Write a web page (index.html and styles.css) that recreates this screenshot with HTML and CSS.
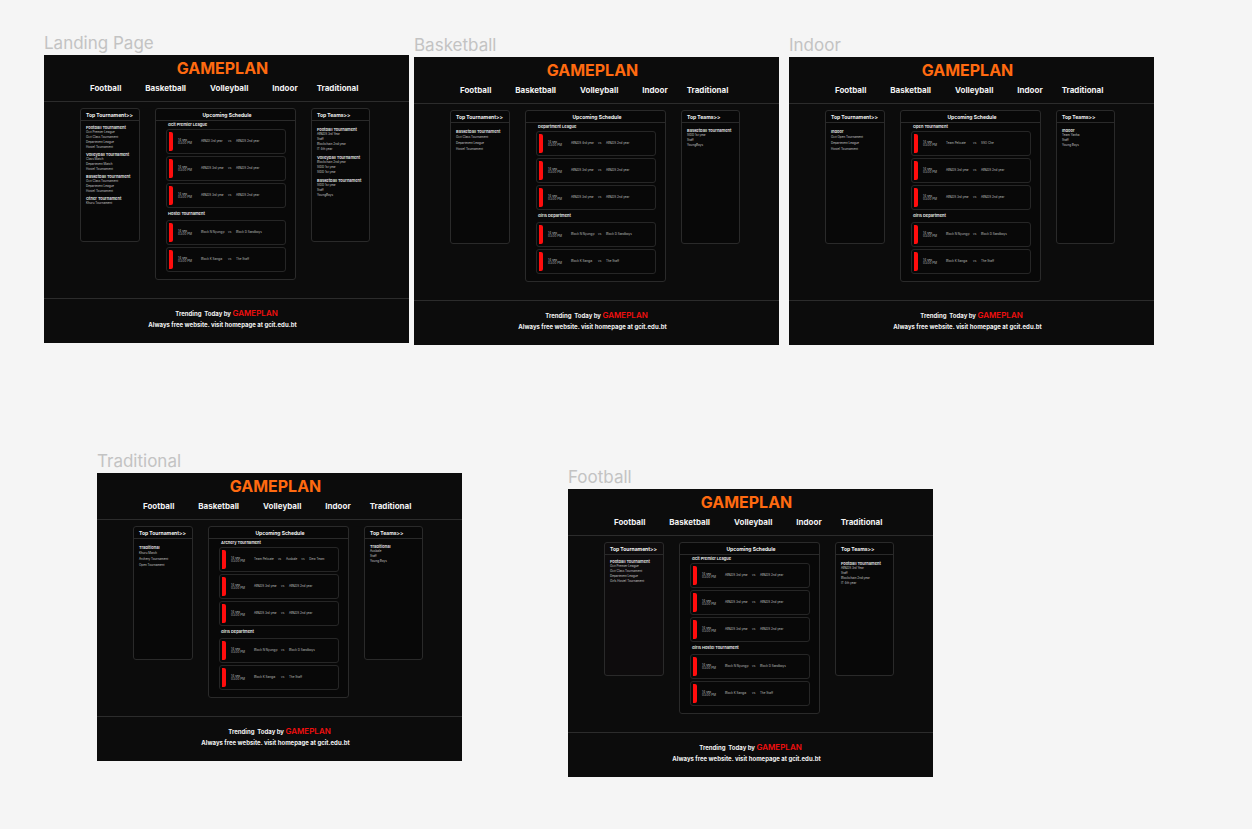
FILE: index.html
```html
<!DOCTYPE html>
<html lang="en">
<head>
<meta charset="utf-8">
<title>Gameplan pages</title>
<link rel="stylesheet" href="styles.css">
</head>
<body>
<main class="canvas">

<section class="artboard landing">
  <h2 class="label">Landing Page</h2>
  <div class="page">
    <header class="top">
      <h1 class="brand">GAMEPLAN</h1>
      <nav class="nav"><a href="#football">Football</a><a href="#basketball">Basketball</a><a href="#volleyball">Volleyball</a><a href="#indoor">Indoor</a><a href="#traditional">Traditional</a></nav>
    </header>
    <div class="columns">
      <aside class="panel side">
        <h3>Top Tournament&gt;&gt;</h3>
        <div class="lists">
          <div><h4>Football Tournament</h4><ul><li>Gcit Premier League</li><li>Gcit Class Tournament</li><li>Department League</li><li>Hostel Tournament</li></ul></div>
          <div><h4>Volleyball Tournament</h4><ul><li>Class Match</li><li>Department Match</li><li>Hostel Tournament</li></ul></div>
          <div><h4>Basketball Tournament</h4><ul><li>Gcit Class Tournament</li><li>Department League</li><li>Hostel Tournament</li></ul></div>
          <div><h4>Other Tournament</h4><ul><li>Khuru Tournament</li></ul></div>
        </div>
      </aside>
      <section class="panel schedule">
        <h3>Upcoming Schedule</h3>
        <h4>Gcit Premier League</h4>
        <div class="matches">
          <article class="match"><time>14 sep<br>03:00 PM</time><p><span>AB&amp;DI 3rd year</span><i>vs</i><span>AB&amp;DS 2nd year</span></p></article>
          <article class="match"><time>14 sep<br>03:00 PM</time><p><span>AB&amp;DS 3rd year</span><i>vs</i><span>AB&amp;DS 2nd year</span></p></article>
          <article class="match"><time>14 sep<br>03:00 PM</time><p><span>AB&amp;DS 3rd year</span><i>vs</i><span>AB&amp;DS 2nd year</span></p></article>
        </div>
        <h4>Hostel Tournament</h4>
        <div class="matches">
          <article class="match"><time>14 sep<br>03:00 PM</time><p><span>Block N Nyungyi</span><i>vs</i><span>Block D Sandboys</span></p></article>
          <article class="match"><time>14 sep<br>03:00 PM</time><p><span>Block K Sangja</span><i>vs</i><span>The Staff</span></p></article>
        </div>
      </section>
      <aside class="panel side teams low">
        <h3>Top Teams&gt;&gt;</h3>
        <div class="lists">
          <div><h4>Football Tournament</h4><ul><li>AB&amp;DS 3rd Year</li><li>Staff</li><li>Blockchain 2nd year</li><li>IT 4th year</li></ul></div>
          <div><h4>Volleyball Tournament</h4><ul><li>Blockchain 2nd year</li><li>SIDD 1st year</li><li>SIDD 1st year</li></ul></div>
          <div><h4>Basketball Tournament</h4><ul><li>SIDD 1st year</li><li>Staff</li><li>YoungBoys</li></ul></div>
        </div>
      </aside>
    </div>
    <footer class="bottom"><p class="trending">Trending&nbsp; Today by <strong>GAMEPLAN</strong></p><p>Always free website. visit homepage at gcit.edu.bt</p></footer>
  </div>
</section>

<section class="artboard basketball">
  <h2 class="label">Basketball</h2>
  <div class="page">
    <header class="top">
      <h1 class="brand">GAMEPLAN</h1>
      <nav class="nav"><a href="#football">Football</a><a href="#basketball">Basketball</a><a href="#volleyball">Volleyball</a><a href="#indoor">Indoor</a><a href="#traditional">Traditional</a></nav>
    </header>
    <div class="columns">
      <aside class="panel side low loose">
        <h3>Top Tournament&gt;&gt;</h3>
        <div class="lists">
          <div><h4>Basketball Tournament</h4><ul><li>Gcit Class Tournament</li><li>Department League</li><li>Hostel Tournament</li></ul></div>
        </div>
      </aside>
      <section class="panel schedule">
        <h3>Upcoming Schedule</h3>
        <h4>Department League</h4>
        <div class="matches">
          <article class="match"><time>14 sep<br>03:00 PM</time><p><span>AB&amp;DS 4rd year</span><i>vs</i><span>AB&amp;DS 2nd year</span></p></article>
          <article class="match"><time>14 sep<br>03:00 PM</time><p><span>AB&amp;DS 3rd year</span><i>vs</i><span>AB&amp;DS 2nd year</span></p></article>
          <article class="match"><time>14 sep<br>03:00 PM</time><p><span>AB&amp;DS 3rd year</span><i>vs</i><span>AB&amp;DS 2nd year</span></p></article>
        </div>
        <h4>Girls Department</h4>
        <div class="matches">
          <article class="match"><time>14 sep<br>03:00 PM</time><p><span>Block N Nyungyi</span><i>vs</i><span>Block D Sandboys</span></p></article>
          <article class="match"><time>14 sep<br>03:00 PM</time><p><span>Block K Sangja</span><i>vs</i><span>The Staff</span></p></article>
        </div>
      </section>
      <aside class="panel side teams">
        <h3>Top Teams&gt;&gt;</h3>
        <div class="lists">
          <div><h4>Basketball Tournament</h4><ul><li>SIDD 1st year</li><li>Staff</li><li>YoungBoys</li></ul></div>
        </div>
      </aside>
    </div>
    <footer class="bottom"><p class="trending">Trending&nbsp; Today by <strong>GAMEPLAN</strong></p><p>Always free website. visit homepage at gcit.edu.bt</p></footer>
  </div>
</section>

<section class="artboard indoor">
  <h2 class="label">Indoor</h2>
  <div class="page">
    <header class="top">
      <h1 class="brand">GAMEPLAN</h1>
      <nav class="nav"><a href="#football">Football</a><a href="#basketball">Basketball</a><a href="#volleyball">Volleyball</a><a href="#indoor">Indoor</a><a href="#traditional">Traditional</a></nav>
    </header>
    <div class="columns">
      <aside class="panel side low loose">
        <h3>Top Tournament&gt;&gt;</h3>
        <div class="lists">
          <div><h4>Indoor</h4><ul><li>Gcit Open Tournament</li><li>Department League</li><li>Hostel Tournament</li></ul></div>
        </div>
      </aside>
      <section class="panel schedule">
        <h3>Upcoming Schedule</h3>
        <h4>Open Tournament</h4>
        <div class="matches">
          <article class="match"><time>14 sep<br>03:00 PM</time><p><span>Team Pelicate</span><i>vs</i><span>SSO Che</span></p></article>
          <article class="match"><time>14 sep<br>03:00 PM</time><p><span>AB&amp;DS 3rd year</span><i>vs</i><span>AB&amp;DS 2nd year</span></p></article>
          <article class="match"><time>14 sep<br>03:00 PM</time><p><span>AB&amp;DS 3rd year</span><i>vs</i><span>AB&amp;DS 2nd year</span></p></article>
        </div>
        <h4>Girls Department</h4>
        <div class="matches">
          <article class="match"><time>14 sep<br>03:00 PM</time><p><span>Block N Nyungyi</span><i>vs</i><span>Block D Sandboys</span></p></article>
          <article class="match"><time>14 sep<br>03:00 PM</time><p><span>Block K Sangja</span><i>vs</i><span>The Staff</span></p></article>
        </div>
      </section>
      <aside class="panel side teams">
        <h3>Top Teams&gt;&gt;</h3>
        <div class="lists">
          <div><h4>Indoor</h4><ul><li>Team Yanha</li><li>Staff</li><li>Young Boys</li></ul></div>
        </div>
      </aside>
    </div>
    <footer class="bottom"><p class="trending">Trending&nbsp; Today by <strong>GAMEPLAN</strong></p><p>Always free website. visit homepage at gcit.edu.bt</p></footer>
  </div>
</section>

<section class="artboard traditional">
  <h2 class="label">Traditional</h2>
  <div class="page">
    <header class="top">
      <h1 class="brand">GAMEPLAN</h1>
      <nav class="nav"><a href="#football">Football</a><a href="#basketball">Basketball</a><a href="#volleyball">Volleyball</a><a href="#indoor">Indoor</a><a href="#traditional">Traditional</a></nav>
    </header>
    <div class="columns">
      <aside class="panel side low loose">
        <h3>Top Tournament&gt;&gt;</h3>
        <div class="lists">
          <div><h4>Traditional</h4><ul><li>Khuru Match</li><li>Archery Tournament</li><li>Open Tournament</li></ul></div>
        </div>
      </aside>
      <section class="panel schedule">
        <h3>Upcoming Schedule</h3>
        <h4>Archery Tournament</h4>
        <div class="matches">
          <article class="match three"><time>14 sep<br>03:00 PM</time><p><span>Team Pelicate</span><i>vs</i><span>Ausbale</span><i>vs</i><span>Dew Team</span></p></article>
          <article class="match"><time>14 sep<br>03:00 PM</time><p><span>AB&amp;DS 3rd year</span><i>vs</i><span>AB&amp;DS 2nd year</span></p></article>
          <article class="match"><time>14 sep<br>03:00 PM</time><p><span>AB&amp;DS 3rd year</span><i>vs</i><span>AB&amp;DS 2nd year</span></p></article>
        </div>
        <h4>Girls Department</h4>
        <div class="matches">
          <article class="match"><time>14 sep<br>03:00 PM</time><p><span>Block N Nyungyi</span><i>vs</i><span>Block D Sandboys</span></p></article>
          <article class="match"><time>14 sep<br>03:00 PM</time><p><span>Block K Sangja</span><i>vs</i><span>The Staff</span></p></article>
        </div>
      </section>
      <aside class="panel side teams">
        <h3>Top Teams&gt;&gt;</h3>
        <div class="lists">
          <div><h4>Traditional</h4><ul><li>Ausbale</li><li>Staff</li><li>Young Boys</li></ul></div>
        </div>
      </aside>
    </div>
    <footer class="bottom"><p class="trending">Trending&nbsp; Today by <strong>GAMEPLAN</strong></p><p>Always free website. visit homepage at gcit.edu.bt</p></footer>
  </div>
</section>

<section class="artboard football">
  <h2 class="label">Football</h2>
  <div class="page">
    <header class="top">
      <h1 class="brand">GAMEPLAN</h1>
      <nav class="nav"><a href="#football">Football</a><a href="#basketball">Basketball</a><a href="#volleyball">Volleyball</a><a href="#indoor">Indoor</a><a href="#traditional">Traditional</a></nav>
    </header>
    <div class="columns">
      <aside class="panel side tinted">
        <h3>Top Tournament&gt;&gt;</h3>
        <div class="lists">
          <div><h4>Football Tournament</h4><ul><li>Gcit Premier League</li><li>Gcit Class Tournament</li><li>Department League</li><li>Girls Hostel Tournament</li></ul></div>
        </div>
      </aside>
      <section class="panel schedule">
        <h3>Upcoming Schedule</h3>
        <h4>Gcit Premier League</h4>
        <div class="matches">
          <article class="match"><time>14 sep<br>03:00 PM</time><p><span>AB&amp;DS 3rd year</span><i>vs</i><span>AB&amp;DS 2nd year</span></p></article>
          <article class="match"><time>14 sep<br>03:00 PM</time><p><span>AB&amp;DS 3rd year</span><i>vs</i><span>AB&amp;DS 2nd year</span></p></article>
          <article class="match"><time>14 sep<br>03:00 PM</time><p><span>AB&amp;DS 3rd year</span><i>vs</i><span>AB&amp;DS 2nd year</span></p></article>
        </div>
        <h4>Girls Hostel Tournament</h4>
        <div class="matches">
          <article class="match"><time>14 sep<br>03:00 PM</time><p><span>Block N Nyungyi</span><i>vs</i><span>Block D Sandboys</span></p></article>
          <article class="match"><time>14 sep<br>03:00 PM</time><p><span>Block K Sangja</span><i>vs</i><span>The Staff</span></p></article>
        </div>
      </section>
      <aside class="panel side teams low">
        <h3>Top Teams&gt;&gt;</h3>
        <div class="lists">
          <div><h4>Football Tournament</h4><ul><li>AB&amp;DS 3rd Year</li><li>Staff</li><li>Blockchain 2nd year</li><li>IT 4th year</li></ul></div>
        </div>
      </aside>
    </div>
    <footer class="bottom"><p class="trending">Trending&nbsp; Today by <strong>GAMEPLAN</strong></p><p>Always free website. visit homepage at gcit.edu.bt</p></footer>
  </div>
</section>

</main>
</body>
</html>
```

FILE: styles.css
```css
* { box-sizing: border-box; margin: 0; padding: 0; }

body {
  background: #f5f5f5;
  font-family: Inter, "Liberation Sans", sans-serif;
}

.canvas { position: relative; min-height: 100vh; }

/* Artboards sit freely on the canvas */
.artboard { position: absolute; width: 365px; }
.landing { left: 44px; top: 31px; }
.basketball { left: 414px; top: 33px; }
.indoor { left: 789px; top: 33px; }
.traditional { left: 97px; top: 449px; }
.football { left: 568px; top: 465px; }

.label {
  font-size: 17px;
  line-height: 24px;
  font-weight: 400;
  color: #c3c3c3;
}

.page {
  display: flex;
  flex-direction: column;
  background: #0c0c0c;
  color: #f2f2f2;
}

.top {
  padding-top: 3px;
  border-bottom: 1px solid #2c2c2c;
}
.brand {
  padding-right: 8px;
  text-align: center;
  font-size: 16px;
  line-height: 20px;
  font-weight: 700;
  color: #ff6a10;
}
.nav {
  display: flex;
  gap: 24px;
  padding: 4px 0 7px 46px;
  font-size: 8px;
  line-height: 12px;
  font-weight: 700;
}
.nav a { color: inherit; text-decoration: none; }
.nav a:last-child { margin-left: -5px; }

.columns {
  display: flex;
  align-items: flex-start;
  gap: 15px;
  padding: 6px 36px 18px;
}
.panel {
  background: #080808;
  border: 1px solid #2a2a2a;
  border-radius: 3px;
}
.panel h3 {
  border-bottom: 1px solid #2a2a2a;
  font-size: 5px;
  line-height: 12px;
  height: 12px;
  font-weight: 700;
}
.panel h4 { font-size: 4px; line-height: 5px; font-weight: 600; }

.side { width: 60px; height: 134px; }
.side h3 { padding-left: 5px; }
.teams { width: 59px; }
.lists {
  display: grid;
  gap: 2px;
  padding: 4px 0 4px 5px;
  font-size: 3px;
  line-height: 5px;
  color: #c4c4c4;
}
.lists h4 { color: #e8e8e8; white-space: nowrap; }
.lists ul { list-style: none; }
.teams .lists { padding-top: 5px; }
.low .lists { padding-top: 6px; gap: 3px; }
.loose .lists { line-height: 6px; }
.tinted { background: #0e0c0d; }

.schedule { width: 141px; padding-bottom: 7px; }
.schedule h3 { padding-left: 3px; text-align: center; }
.schedule h4 { padding-left: 12px; line-height: 12px; }
.schedule h3 + h4 { line-height: 8px; }

.matches { display: grid; gap: 2px; padding: 0 9px 0 10px; }
.match {
  display: flex;
  align-items: center;
  height: 25px;
  border: 1px solid #262626;
  border-radius: 3px;
  padding-left: 2px;
  font-size: 3px;
  line-height: 3px;
  color: #bdbdbd;
}
.match::before {
  content: "";
  width: 4px;
  height: 19px;
  margin-right: 5px;
  background: #ff0d0d;
  border-radius: 0 2px 2px 0;
}
.match time { width: 23px; }
.match p { display: flex; }
.match span { min-width: 27px; }
.match i { width: 8px; font-style: normal; }
.three span { min-width: 0; margin-right: 4px; }

.bottom {
  border-top: 1px solid #2c2c2c;
  padding: 9px 8px 13px 0;
  text-align: center;
  font-size: 6px;
  font-weight: 700;
  line-height: 11px;
}
.trending { padding-left: 8px; }
.bottom strong { font-size: 8px; font-weight: 600; color: #f00f0f; }
```
